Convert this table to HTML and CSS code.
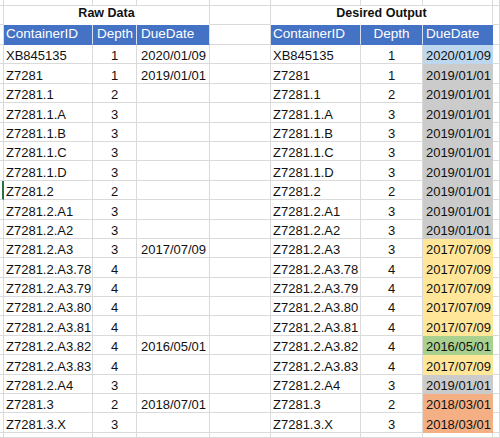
FILE: index.html
```html
<!DOCTYPE html>
<html>
<head>
<meta charset="utf-8">
<link rel="stylesheet" href="styles.css">
</head>
<body>
<div class="sheet">
  <div class="row top">
    <div class="c c0"></div><div class="c ca"></div><div class="c cb"></div><div class="c cc"></div><div class="c cd"></div><div class="c ce"></div><div class="c cf"></div><div class="c cg"></div><div class="c ch"></div>
  </div>
  <div class="row title">
    <div class="c c0"></div><div class="c tA">Raw Data</div><div class="c cd"></div><div class="c tE">Desired Output</div><div class="c ch"></div>
  </div>
  <div class="row head">
    <div class="c c0"></div><div class="c ca h">ContainerID</div><div class="c cb h hb">Depth</div><div class="c cc h">DueDate</div><div class="c cd"></div><div class="c ce h">ContainerID</div><div class="c cf h mid">Depth</div><div class="c cg h hg">DueDate</div><div class="c ch"></div>
  </div>

  <div class="row data"><div class="c c0"></div><div class="c ca">XB845135</div><div class="c cb mid">1</div><div class="c cc">2020/01/09</div><div class="c cd"></div><div class="c ce">XB845135</div><div class="c cf mid">1</div><div class="c cg right f-blue">2020/01/09</div><div class="c ch"></div></div>
  <div class="row data"><div class="c c0"></div><div class="c ca">Z7281</div><div class="c cb mid">1</div><div class="c cc">2019/01/01</div><div class="c cd"></div><div class="c ce">Z7281</div><div class="c cf mid">1</div><div class="c cg right f-gray">2019/01/01</div><div class="c ch"></div></div>
  <div class="row data"><div class="c c0"></div><div class="c ca">Z7281.1</div><div class="c cb mid">2</div><div class="c cc"></div><div class="c cd"></div><div class="c ce">Z7281.1</div><div class="c cf mid">2</div><div class="c cg right f-gray">2019/01/01</div><div class="c ch"></div></div>
  <div class="row data"><div class="c c0"></div><div class="c ca">Z7281.1.A</div><div class="c cb mid">3</div><div class="c cc"></div><div class="c cd"></div><div class="c ce">Z7281.1.A</div><div class="c cf mid">3</div><div class="c cg right f-gray">2019/01/01</div><div class="c ch"></div></div>
  <div class="row data"><div class="c c0"></div><div class="c ca">Z7281.1.B</div><div class="c cb mid">3</div><div class="c cc"></div><div class="c cd"></div><div class="c ce">Z7281.1.B</div><div class="c cf mid">3</div><div class="c cg right f-gray">2019/01/01</div><div class="c ch"></div></div>
  <div class="row data"><div class="c c0"></div><div class="c ca">Z7281.1.C</div><div class="c cb mid">3</div><div class="c cc"></div><div class="c cd"></div><div class="c ce">Z7281.1.C</div><div class="c cf mid">3</div><div class="c cg right f-gray">2019/01/01</div><div class="c ch"></div></div>
  <div class="row data"><div class="c c0"></div><div class="c ca">Z7281.1.D</div><div class="c cb mid">3</div><div class="c cc"></div><div class="c cd"></div><div class="c ce">Z7281.1.D</div><div class="c cf mid">3</div><div class="c cg right f-gray">2019/01/01</div><div class="c ch"></div></div>
  <div class="row data"><div class="c c0 sel"></div><div class="c ca">Z7281.2</div><div class="c cb mid">2</div><div class="c cc"></div><div class="c cd"></div><div class="c ce">Z7281.2</div><div class="c cf mid">2</div><div class="c cg right f-gray">2019/01/01</div><div class="c ch"></div></div>
  <div class="row data"><div class="c c0"></div><div class="c ca">Z7281.2.A1</div><div class="c cb mid">3</div><div class="c cc"></div><div class="c cd"></div><div class="c ce">Z7281.2.A1</div><div class="c cf mid">3</div><div class="c cg right f-gray">2019/01/01</div><div class="c ch"></div></div>
  <div class="row data"><div class="c c0"></div><div class="c ca">Z7281.2.A2</div><div class="c cb mid">3</div><div class="c cc"></div><div class="c cd"></div><div class="c ce">Z7281.2.A2</div><div class="c cf mid">3</div><div class="c cg right f-gray">2019/01/01</div><div class="c ch"></div></div>
  <div class="row data"><div class="c c0"></div><div class="c ca">Z7281.2.A3</div><div class="c cb mid">3</div><div class="c cc">2017/07/09</div><div class="c cd"></div><div class="c ce">Z7281.2.A3</div><div class="c cf mid">3</div><div class="c cg right f-yellow">2017/07/09</div><div class="c ch"></div></div>
  <div class="row data"><div class="c c0"></div><div class="c ca">Z7281.2.A3.78</div><div class="c cb mid">4</div><div class="c cc"></div><div class="c cd"></div><div class="c ce">Z7281.2.A3.78</div><div class="c cf mid">4</div><div class="c cg right f-yellow">2017/07/09</div><div class="c ch"></div></div>
  <div class="row data"><div class="c c0"></div><div class="c ca">Z7281.2.A3.79</div><div class="c cb mid">4</div><div class="c cc"></div><div class="c cd"></div><div class="c ce">Z7281.2.A3.79</div><div class="c cf mid">4</div><div class="c cg right f-yellow">2017/07/09</div><div class="c ch"></div></div>
  <div class="row data"><div class="c c0"></div><div class="c ca">Z7281.2.A3.80</div><div class="c cb mid">4</div><div class="c cc"></div><div class="c cd"></div><div class="c ce">Z7281.2.A3.80</div><div class="c cf mid">4</div><div class="c cg right f-yellow">2017/07/09</div><div class="c ch"></div></div>
  <div class="row data"><div class="c c0"></div><div class="c ca">Z7281.2.A3.81</div><div class="c cb mid">4</div><div class="c cc"></div><div class="c cd"></div><div class="c ce">Z7281.2.A3.81</div><div class="c cf mid">4</div><div class="c cg right f-yellow">2017/07/09</div><div class="c ch"></div></div>
  <div class="row data"><div class="c c0"></div><div class="c ca">Z7281.2.A3.82</div><div class="c cb mid">4</div><div class="c cc">2016/05/01</div><div class="c cd"></div><div class="c ce">Z7281.2.A3.82</div><div class="c cf mid">4</div><div class="c cg right f-green">2016/05/01</div><div class="c ch"></div></div>
  <div class="row data"><div class="c c0"></div><div class="c ca">Z7281.2.A3.83</div><div class="c cb mid">4</div><div class="c cc"></div><div class="c cd"></div><div class="c ce">Z7281.2.A3.83</div><div class="c cf mid">4</div><div class="c cg right f-yellow">2017/07/09</div><div class="c ch"></div></div>
  <div class="row data"><div class="c c0"></div><div class="c ca">Z7281.2.A4</div><div class="c cb mid">3</div><div class="c cc"></div><div class="c cd"></div><div class="c ce">Z7281.2.A4</div><div class="c cf mid">3</div><div class="c cg right f-gray">2019/01/01</div><div class="c ch"></div></div>
  <div class="row data"><div class="c c0"></div><div class="c ca">Z7281.3</div><div class="c cb mid">2</div><div class="c cc">2018/07/01</div><div class="c cd"></div><div class="c ce">Z7281.3</div><div class="c cf mid">2</div><div class="c cg right f-orange">2018/03/01</div><div class="c ch"></div></div>
  <div class="row data"><div class="c c0"></div><div class="c ca">Z7281.3.X</div><div class="c cb mid">3</div><div class="c cc"></div><div class="c cd"></div><div class="c ce">Z7281.3.X</div><div class="c cf mid">3</div><div class="c cg right f-orange">2018/03/01</div><div class="c ch"></div></div>

  <div class="row end">
    <div class="c c0"></div><div class="c ca"></div><div class="c cb"></div><div class="c cc"></div><div class="c cd"></div><div class="c ce"></div><div class="c cf"></div><div class="c cg"></div><div class="c ch"></div>
  </div>
</div>
</body>
</html>
```

FILE: styles.css
```css
html, body {
  margin: 0;
  padding: 0;
  background: #ffffff;
  overflow: hidden;
}

.sheet {
  width: 500px;
  height: 438px;
  display: flex;
  flex-direction: column;
  font-family: "Liberation Sans", Arial, sans-serif;
  font-size: 13px;
  color: #111111;
}

.row {
  display: flex;
  flex: none;
}

.row.top { height: 6px; }
.row.title { height: 19px; }
.row.head { height: 20px; }
.row.data { height: 19.4px; }
.row.end { flex: 1; }

.c {
  box-sizing: border-box;
  flex: none;
  display: flex;
  align-items: flex-end;
  line-height: 15px;
  white-space: nowrap;
  overflow: hidden;
  border-right: 1px solid #dadada;
  border-bottom: 1px solid #dadada;
  padding: 0 2px;
}

.c0 { width: 4px; padding: 0; }
.ca { width: 89px; }
.cb { width: 44px; }
.cc { width: 73px; padding-left: 4px; }
.cd { width: 61px; }
.ce { width: 90px; }
.cf { width: 62px; }
.cg { width: 70px; }
.ch { flex: 1; }

.c0.sel { border-right: 2px solid #217346; }

.tA, .tE {
  justify-content: center;
  font-weight: bold;
  font-size: 12.5px;
  padding-bottom: 3px;
  border-bottom-color: #ffffff;
}
.tA { width: 206px; }
.tE { width: 222px; }

.h {
  background: #4472c4;
  color: #ffffff;
  font-size: 13.5px;
  border-right-color: #d6e0f3;
  border-bottom-color: #4472c4;
  padding-bottom: 3px;
}
.hb { padding-left: 4px; }
.hg { padding-left: 3px; border-right-color: #4472c4; }

.mid { justify-content: center; }
.right { justify-content: flex-end; padding-right: 1px; }

.f-blue { background: #bdd7ee; border-color: #bdd7ee; }
.f-gray { background: #cccbcb; border-color: #cccbcb; }
.f-yellow { background: #ffe699; border-color: #ffe699; }
.f-green { background: #a9d08e; border-color: #a9d08e; }
.f-orange { background: #f4b084; border-color: #f4b084; }
```
